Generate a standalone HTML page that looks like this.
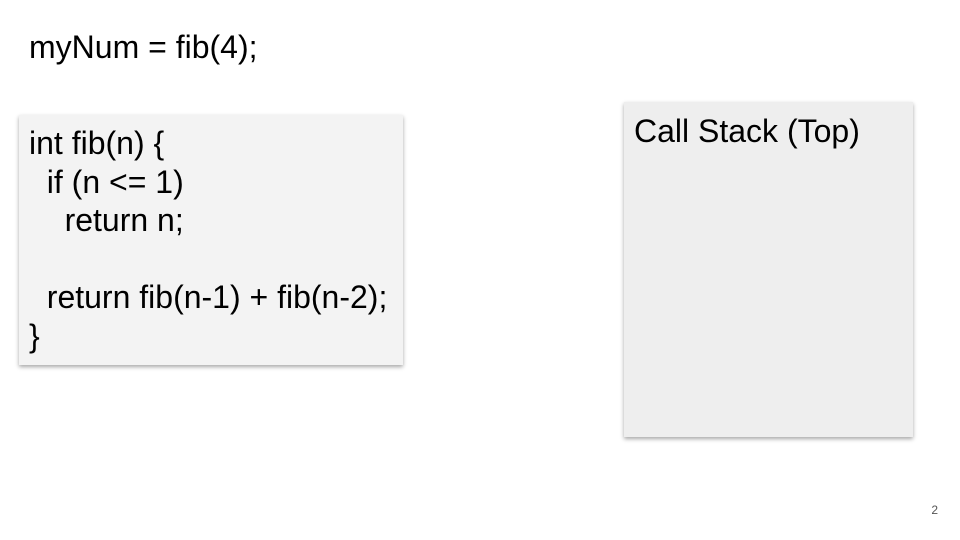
<!DOCTYPE html>
<html><head><meta charset="utf-8"><style>
body{margin:0;width:960px;height:540px;background:#fff;position:relative;overflow:hidden;font-family:"Liberation Sans",sans-serif;color:#000}
.t{position:absolute;left:29px;top:29px;font-size:32px;line-height:37px}
.box{position:absolute;box-shadow:0 2px 4px rgba(0,0,0,.35)}
.code{left:19px;top:115px;width:384px;height:250px;background:#f3f3f3}
.code pre{margin:0;position:absolute;left:10px;top:9px;font-family:"Liberation Sans",sans-serif;font-size:32px;line-height:38.5px}
.cs{left:624px;top:102px;width:289px;height:335px;background:#eeeeee}
.cs div{position:absolute;left:10px;top:11px;font-size:32px;line-height:37px}
.n{position:absolute;right:22px;top:503px;font-size:12px;color:#555}
</style></head><body>
<div class="t">myNum = fib(4);</div>
<div class="box code"><pre>int fib(n) {
  if (n &lt;= 1)
    return n;

  return fib(n-1) + fib(n-2);
}</pre></div>
<div class="box cs"><div>Call Stack (Top)</div></div>
<div class="n">2</div>
</body></html>
